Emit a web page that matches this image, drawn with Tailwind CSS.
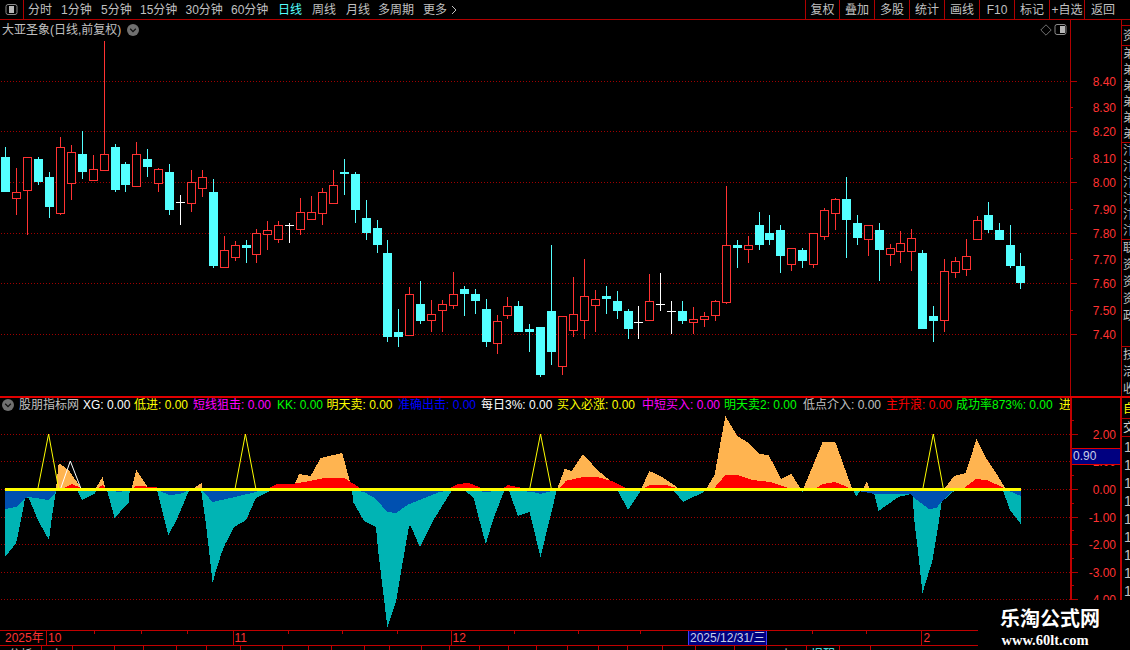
<!DOCTYPE html>
<html lang="zh-CN">
<head>
<meta charset="UTF-8">
<title>大亚圣象 日线</title>
<script src="https://cdn.jsdelivr.net/npm/@tailwindcss/browser@4"></script>
</head>
<body class="bg-black">
<div class="relative w-[1130px] h-[650px] overflow-hidden bg-black text-[12px] leading-[16px] text-[#c0c0c0] font-['Liberation_Sans','Noto_Sans_CJK_SC',sans-serif]">

  <!-- toolbar -->
  <div class="flex h-[20px] border-b border-[#b00000] whitespace-nowrap">
    <div class="flex w-[24px] shrink-0 items-center justify-center border-r border-[#b00000]">
      <svg width="13" height="11" viewBox="0 0 13 11" class="mb-[1px]"><rect x="1" y=".5" width="11" height="10" rx="2" fill="none" stroke="#8a8a8a"/><rect x="4" y="2" width="5" height="7" fill="#b8b8b8"/></svg>
    </div>
    <div class="flex flex-1 items-center pl-[4px]">
      <span class="w-[33px]">分时</span>
      <span class="w-[40px]">1分钟</span>
      <span class="w-[39px]">5分钟</span>
      <span class="w-[45.5px]">15分钟</span>
      <span class="w-[45.5px]">30分钟</span>
      <span class="w-[47px]">60分钟</span>
      <span class="w-[34px] text-[#54ffff]">日线</span>
      <span class="w-[34px]">周线</span>
      <span class="w-[32px]">月线</span>
      <span class="w-[45px]">多周期</span>
      <span class="w-[28px]">更多</span>
      <svg width="6" height="10" viewBox="0 0 6 10"><path d="M1 1l4 4-4 4" fill="none" stroke="#c0c0c0"/></svg>
    </div>
    <div class="flex items-center">
      <span class="flex h-[19px] w-[34px] items-center justify-center border-l border-[#b00000]">复权</span>
      <span class="flex h-[19px] w-[35px] items-center justify-center border-l border-[#b00000]">叠加</span>
      <span class="flex h-[19px] w-[35px] items-center justify-center border-l border-[#b00000]">多股</span>
      <span class="flex h-[19px] w-[35px] items-center justify-center border-l border-[#b00000]">统计</span>
      <span class="flex h-[19px] w-[35px] items-center justify-center border-l border-[#b00000]">画线</span>
      <span class="flex h-[19px] w-[35px] items-center justify-center border-l border-[#b00000]">F10</span>
      <span class="flex h-[19px] w-[35px] items-center justify-center border-l border-[#b00000]">标记</span>
      <span class="flex h-[19px] w-[35px] items-center justify-center border-l border-[#b00000]">+自选</span>
      <span class="flex h-[19px] w-[46px] items-center pl-[6px] border-l border-[#b00000]">返回</span>
    </div>
  </div>

  <!-- price pane -->
  <div class="flex h-[378px] border-b-2 border-[#e00000]">
    <div class="relative w-[1070px] shrink-0">
      <svg id="price" class="block h-full w-full" viewBox="0 20 1070 376" shape-rendering="crispEdges"></svg>
      <div class="absolute inset-x-0 top-0 flex h-[19px] items-center pl-[2px] pr-[3px]">
        <span class="whitespace-nowrap">大亚圣象(日线,前复权)</span>
        <svg width="12" height="12" viewBox="0 0 12 12" class="ml-[6px]"><circle cx="6" cy="6" r="6" fill="#707070"/><path d="M3.2 4.8L6 7.6l2.8-2.8" fill="none" stroke="#111" stroke-width="1.3"/></svg>
        <svg width="12" height="12" viewBox="0 0 12 12" class="ml-auto"><path d="M6 .8L11.2 6 6 11.2.8 6z" fill="none" stroke="#707070"/></svg>
        <svg width="13" height="11" viewBox="0 0 13 11" class="ml-[2px]"><rect x="1" y=".5" width="11" height="10" rx="2" fill="none" stroke="#8a8a8a"/><rect x="6" y="2" width="5" height="7" fill="#b8b8b8"/></svg>
      </div>
    </div>
    <div class="w-[52px] shrink-0 border-x border-[#b00000]">
      <svg id="priceAxis" class="block h-full w-full" viewBox="1071 20 50 376" shape-rendering="crispEdges"></svg>
    </div>
    <div class="w-[8px] shrink-0 overflow-hidden pt-[5px]">
      <div class="h-[20px] w-[12px] border-t border-[#b00000] pl-[1px] pt-[2px] leading-[16px]">资</div>
      <div class="h-[97px] w-[12px] border-t border-[#b00000] pl-[1px] leading-[16px] break-all">弟弟弟弟弟弟</div>
      <div class="h-[97px] w-[12px] border-t border-[#b00000] pl-[1px] leading-[16px] break-all">汴汴汴汴汴汴</div>
      <div class="h-[107px] w-[12px] border-t border-[#b00000] pl-[1px] leading-[17px] break-all">联资资资政</div>
      <div class="h-[50px] w-[12px] border-t border-[#b00000] pl-[1px] leading-[17px] break-all">技活收</div>
    </div>
  </div>

  <!-- indicator pane -->
  <div class="flex h-[232px]">
    <div class="relative w-[1070px] shrink-0 overflow-hidden">
      <svg id="indi" class="block h-full w-full" viewBox="0 398 1070 232" shape-rendering="crispEdges"></svg>
      <div class="absolute inset-x-0 top-0 flex h-[14px] items-center whitespace-nowrap">
        <svg width="12" height="12" viewBox="0 0 12 12" class="ml-[2px] mr-[5px] shrink-0"><circle cx="6" cy="6" r="6" fill="#707070"/><path d="M3.2 4.8L6 7.6l2.8-2.8" fill="none" stroke="#111" stroke-width="1.3"/></svg>
        <span class="w-[64px] shrink-0">股朋指标网</span>
        <span class="w-[51px] shrink-0 text-white">XG: 0.00</span>
        <span class="w-[59px] shrink-0 text-[#ffff00]">低进: 0.00</span>
        <span class="w-[84px] shrink-0 text-[#ff00ff]">短线狙击: 0.00</span>
        <span class="w-[49.5px] shrink-0 text-[#00ff00]">KK: 0.00</span>
        <span class="w-[71.5px] shrink-0 text-[#ffff00]">明天卖: 0.00</span>
        <span class="w-[83px] shrink-0 text-[#0000ff]">准确出击: 0.00</span>
        <span class="w-[76px] shrink-0 text-white">每日3%: 0.00</span>
        <span class="w-[85px] shrink-0 text-[#ffff00]">买入必涨: 0.00</span>
        <span class="w-[82px] shrink-0 text-[#ff00ff]">中短买入: 0.00</span>
        <span class="w-[79px] shrink-0 text-[#00ff00]">明天卖2: 0.00</span>
        <span class="w-[83px] shrink-0 text-[#c0c0c0]">低点介入: 0.00</span>
        <span class="w-[70px] shrink-0 text-[#ff0000]">主升浪: 0.00</span>
        <span class="w-[103px] shrink-0 text-[#00ff00]">成功率873%: 0.00</span>
        <span class="shrink-0 text-[#ffff00]">进</span>
      </div>
    </div>
    <div class="relative w-[52px] shrink-0 border-x-2 border-[#c00000]">
      <svg id="indiAxis" class="block h-full w-full" viewBox="1072 398 48 232" shape-rendering="crispEdges"></svg>
      <div class="absolute inset-x-0 top-[50px] h-[17px] border-y border-[#e00000] bg-[#000080] pl-[1px] leading-[15px] text-[#c8d0e8]">0.90</div>
    </div>
    <div class="w-[8px] shrink-0 overflow-hidden">
      <div class="h-[20px] w-[12px] pl-[1px] pt-[3px] text-[#ffff00]">自</div>
      <div class="h-[19px] w-[12px] border-y border-[#b00000] pl-[1px] pt-[1px] text-[#d0d0d0]">交</div>
      <div class="w-[12px] pl-[2px] pt-[1px] text-[14px] leading-[18px] break-all text-[#c0c0c0]">1 1 1 1 1 1 1 1 1</div>
    </div>
  </div>

  <!-- date axis -->
  <div class="relative flex h-[16px] border-y border-[#c00000] text-[#ff3232] leading-[14px]">
    <span class="w-[47px] shrink-0 border-r border-[#c00000] pl-[5px]">2025年</span>
    <span class="w-[186.5px] shrink-0 border-r border-[#c00000] pl-[1px]">10</span>
    <span class="w-[218px] shrink-0 border-r border-[#c00000] pl-[1px]">11</span>
    <span class="w-[236.5px] shrink-0 pl-[1px]">12</span>
    <span class="w-[79px] shrink-0 border-x border-[#3c3cff] bg-[#000080] pl-[1px] text-[#c8d0e8] whitespace-nowrap">2025/12/31/三</span>
    <span class="w-[154.5px] shrink-0 border-r border-[#c00000]"></span>
    <span class="pl-[2px]">2</span>
    <svg id="ticks" class="absolute left-0 top-0 h-[3px] w-[1130px]" viewBox="0 0 1130 3" shape-rendering="crispEdges"></svg>
  </div>
  <div id="tabs" class="flex h-[4px] overflow-hidden"></div>

  <!-- watermark -->
  <div class="absolute bottom-0 right-0 flex h-[50px] w-[152px] flex-col items-center bg-black pt-[6px] pr-[8px] text-white">
    <span class="text-[20px] leading-[26px] font-bold">乐淘公式网</span>
    <span class="pr-[10px] text-[14.5px] leading-[16px] font-bold font-['Liberation_Serif',serif]">www.60lt.com</span>
  </div>
</div>

<script>
  const CYAN = '#54ffff', RED = '#ff3232', GRID = '#a00000', AXIS = '#b00000';

  // type, wick top, body top, body bottom, wick bottom
  const candles = [
    ['c',147,157,192,192],['r',168,192,198,215],['r',157,157,190,235],['c',157,159,182,185],
    ['c',172,177,207,218],['r',137,147,213,215],['r',145,152,183,200],['c',131,154,172,179],
    ['r',155,169,180,180],['r',41,154,170,170],['c',144,147,190,192],['c',162,164,185,192],
    ['r',142,154,186,186],['c',149,159,167,177],['r',168,169,183,192],['c',164,172,210,215],
    ['w',195,202,202,225],['r',170,182,203,212],['r',170,177,188,197],['c',179,192,266,268],
    ['r',236,250,267,267],['r',241,245,257,261],['c',240,245,248,263],['r',229,233,254,263],
    ['r',221,230,234,250],['r',221,225,239,243],['w',223,225,225,243],['r',198,212,229,235],
    ['r',196,212,219,220],['r',188,192,213,225],['r',170,185,203,203],['c',159,172,174,195],
    ['c',172,174,210,223],['c',200,218,233,240],['c',220,228,245,253],['c',240,253,337,342],
    ['c',309,332,337,347],['r',287,294,335,335],['c',281,304,321,324],['r',300,314,320,332],
    ['r',300,304,310,332],['r',272,294,305,309],['c',286,289,294,316],['c',289,294,301,314],
    ['c',299,309,342,347],['r',315,321,343,354],['r',297,306,315,319],['c',301,306,332,332],
    ['c',324,329,332,352],['c',327,327,375,377],['c',245,311,352,365],['r',316,316,366,375],
    ['r',277,314,330,337],['r',259,296,320,339],['r',290,299,305,332],['c',286,296,299,314],
    ['c',291,301,311,319],['c',309,311,329,339],['w',306,322,322,339],['r',274,301,320,321],
    ['w',273,304,304,311],['w',301,311,311,334],['c',301,311,321,324],['r',307,319,322,334],
    ['r',312,316,319,327],['r',300,301,315,321],['r',186,245,302,304],['c',240,245,248,268],
    ['r',236,245,249,263],['c',212,225,245,250],['c',215,233,240,245],['c',225,230,256,273],
    ['r',248,248,264,271],['c',248,250,261,268],['r',233,233,264,268],['r',208,210,236,240],
    ['r',198,199,213,230],['c',177,199,220,258],['c',215,223,238,245],['r',225,225,239,256],
    ['c',223,230,250,281],['r',244,248,254,266],['r',231,243,251,263],['r',229,238,251,271],
    ['c',250,253,329,329],['c',306,316,321,342],['r',259,271,320,332],['r',257,261,272,278],
    ['r',239,256,269,276],['r',216,220,239,240],['c',202,215,230,233],['c',223,230,240,240],
    ['c',225,245,266,268],['c',253,266,283,289],
  ];

  function rect(x, y, w, h, fill) {
    return `<rect x="${x}" y="${y}" width="${w}" height="${h}" fill="${fill}"/>`;
  }

  function dotted(y, x2) {
    return `<line x1="1" y1="${y}.5" x2="${x2}" y2="${y}.5" stroke="${GRID}" stroke-dasharray="1 2"/>`;
  }

  let out = [81, 131, 182, 233, 283, 334].map(y => dotted(y, 1067)).join('');
  candles.forEach((c, i) => {
    const [t, top, bodyTop, bodyBot, bot] = c;
    const x = Math.round(5.4 + 10.915 * i);
    const col = t == 'c' ? CYAN : t == 'r' ? RED : '#ffffff';
    out += rect(x, top, 1, bot - top, col);
    if (t == 'w') {
      out += rect(x - 4, bodyTop, 9, 1, col);
    } else if (t == 'c') {
      out += rect(x - 4, bodyTop, 9, bodyBot - bodyTop, col);
    } else {
      out += `<rect x="${x - 3.5}" y="${bodyTop + 0.5}" width="8" height="${bodyBot - bodyTop}" fill="#000" stroke="${col}"/>`;
    }
  });
  document.getElementById('price').innerHTML = out;

  function axis(id, x0, labels, minor, right) {
    let s = '';
    labels.forEach(([y, txt, major]) => {
      s += rect(x0, Math.round(y), major ? 6 : 2, 1, AXIS);
      s += `<text x="${right}" y="${y + 4.5}" text-anchor="end" fill="${RED}" font-size="12" shape-rendering="auto">${txt}</text>`;
    });
    minor.forEach(y => { s += rect(x0, y, 2, 1, AXIS); });
    document.getElementById(id).innerHTML = s;
  }

  axis('priceAxis', 1071, [
    [81, '8.40', 1], [107, '8.30'], [131, '8.20', 1], [158, '8.10'], [182, '8.00', 1], [209, '7.90'],
    [233, '7.80', 1], [259, '7.70'], [283, '7.60', 1], [310, '7.50'], [334, '7.40', 1],
  ], [], 1116);

  axis('indiAxis', 1072, [
    [434, '2.00', 1], [461, '1.00', 1], [489, '0.00', 1], [517, '-1.00', 1], [544, '-2.00', 1], [572, '-3.00', 1], [599, '-4.00', 1],
  ], [420, 448, 475, 503, 530, 558, 585], 1116);

  // areas, measured off the 2.775x horizontal crop: left half from x=0, right half from x=565
  const L = x => x / 2.775, R = x => 565 + x / 2.775;
  const BASE = 490;

  const teal = [
    [L,[14,557],[45,543],[58,520],[70,498],[80,498],[105,520],[136,540],[143,520],[155,491],[160,490]],
    [L,[214,490],[228,500],[262,494],[268,490]],
    [L,[297,490],[318,518],[358,502],[360,490]],
    [L,[436,490],[467,535],[490,520],[525,490]],
    [L,[558,490],[570,520],[578,544],[590,583],[600,570],[615,553],[625,544],[650,527],[683,520],[710,498],[750,491]],
    [L,[977,490],[980,502],[1010,521],[1043,527],[1050,553],[1075,627],[1100,600],[1120,557],[1135,526],[1140,526],[1165,547],[1203,520],[1253,491]],
    [L,[1288,490],[1315,498],[1330,520],[1348,544],[1368,520],[1400,490]],
    [L,[1412,490],[1437,516],[1470,512],[1475,520],[1500,557],[1525,520],[1545,490]],
    [R,[145,490],[175,510],[212,490]],
    [R,[300,490],[328,502],[385,492]],
    [R,[652,490],[658,492],[664,490]],
    [R,[800,490],[808,497],[820,490]],
    [R,[855,490],[870,511],[925,497],[960,494],[963,490],[970,522],[980,553],[992,593],[1020,560],[1038,520],[1045,502],[1080,491]],
    [R,[1215,490],[1235,510],[1265,524]],
  ];
  const blue = [
    [L,[14,509],[45,507],[70,498],[80,497],[135,500],[155,492],[160,490]],
    [L,[300,490],[330,492],[360,490]],
    [L,[436,490],[470,495],[500,494],[525,490]],
    [L,[560,490],[590,502],[640,498],[710,492],[720,490]],
    [L,[977,490],[1010,492],[1040,498],[1075,512],[1100,513],[1130,505],[1220,492],[1253,490]],
    [L,[1300,490],[1350,492],[1400,490]],
    [L,[1412,490],[1480,492],[1500,494],[1540,490]],
    [R,[800,490],[860,494],[920,494],[960,494],[970,498],[1010,509],[1030,508],[1050,500],[1080,490]],
    [R,[1215,490],[1240,492],[1265,496]],
  ];
  const orange = [
    [L,[155,490],[163,463],[190,470],[225,488],[225,490]],
    [L,[262,490],[285,477],[292,488],[300,490]],
    [L,[364,490],[378,470],[408,486],[408,490]],
    [L,[530,490],[560,483],[560,490]],
    [L,[810,490],[830,474],[862,476],[890,458],[950,453],[970,480],[975,490]],
    [L,[1545,490],[1568,468],[1568,490]],
    [R,[0,469],[18,471],[50,454],[90,470],[130,482],[145,488],[150,490]],
    [R,[210,490],[234,471],[270,477],[310,487],[320,490]],
    [R,[390,490],[415,475],[445,416],[478,436],[505,442],[540,454],[565,455],[600,479],[628,474],[655,489],[660,490],[715,442],[750,442],[795,487],[800,490]],
    [R,[825,490],[838,481],[845,490]],
    [R,[950,490],[957,488],[962,490]],
    [R,[1050,490],[1080,476],[1112,473],[1142,439],[1170,459],[1200,475],[1225,490]],
  ];
  const red = [
    [L,[165,490],[200,484],[225,488],[230,490]],
    [L,[262,490],[285,485],[300,490]],
    [L,[368,490],[375,486],[435,487],[440,490]],
    [L,[735,490],[770,484],[810,484],[860,481],[900,478],[955,478],[995,487],[1000,490]],
    [L,[1240,490],[1270,484],[1300,483],[1330,487],[1335,490]],
    [L,[1390,490],[1410,485],[1450,488],[1455,490]],
    [L,[1548,490],[1568,482],[1568,490]],
    [R,[0,481],[50,477],[90,477],[130,481],[170,488],[175,490]],
    [R,[210,490],[235,485],[280,485],[310,488],[315,490]],
    [R,[410,490],[445,475],[480,475],[520,480],[570,482],[620,488],[625,490]],
    [R,[690,490],[715,484],[750,482],[790,488],[795,490]],
    [R,[1100,490],[1140,479],[1170,480],[1220,488],[1225,490]],
  ];

  function poly(list, fill) {
    return list.map(([fx, ...pts]) => {
      const first = fx(pts[0][0]).toFixed(1), last = fx(pts[pts.length - 1][0]).toFixed(1);
      const p = pts.map(([x, y]) => fx(x).toFixed(1) + ',' + y).join(' ');
      return `<polygon points="${first},${BASE} ${p} ${last},${BASE}" fill="${fill}"/>`;
    }).join('');
  }

  function spike(a, b, c, peak, col) {
    return `<polyline points="${a.toFixed(1)},489 ${b.toFixed(1)},${peak} ${c.toFixed(1)},489" fill="none" stroke="${col}" shape-rendering="auto"/>`;
  }

  let ind = [434, 461, 517, 544, 572, 599].map(y => dotted(y, 1070)).join('') + dotted(489, 1070);
  ind += poly(teal, '#00b4b4') + poly(blue, '#0050b0') + poly(orange, '#ffb450') + poly(red, '#ff0000');
  ind += spike(L(105), L(135), L(163), 434, '#ffff00');
  ind += spike(L(168), L(195), L(225), 461, '#ffffff');
  ind += spike(L(652), L(681), L(710), 434, '#ffff00');
  ind += spike(L(1470), L(1500), L(1530), 434, '#ffff00');
  ind += spike(R(993), R(1022), R(1050), 434, '#ffff00');
  ind += rect(5, 488, 1016, 3, '#ffff00');
  document.getElementById('indi').innerHTML = ind;

  document.getElementById('ticks').innerHTML =
    [94, 141, 187, 288, 342, 397, 514, 578, 640, 812, 866].map(x => rect(x, 0, 1, 3, '#c00000')).join('');

  // clipped tab strip along the bottom edge
  const tabEdges = [42, 73, 115, 144, 177, 207, 241, 283, 309, 332, 365, 390, 422, 450, 480, 509, 537, 568, 599, 628, 663, 696, 735, 767, 807, 840, 871];
  const tabText = { 0: ' 分析', 1: '  上', 24: '    上', 25: '提醒' };
  let prev = 0;
  document.getElementById('tabs').innerHTML = tabEdges.map((e, i) => {
    const html = `<div class="shrink-0 border-r border-[#c00000] text-center leading-[19px] ${i == 25 ? 'text-[#54ffff]' : 'text-[#c0c0c0]'}" style="width:${e - prev}px">${tabText[i] || ''}</div>`;
    prev = e;
    return html;
  }).join('');
</script>
</body>
</html>
